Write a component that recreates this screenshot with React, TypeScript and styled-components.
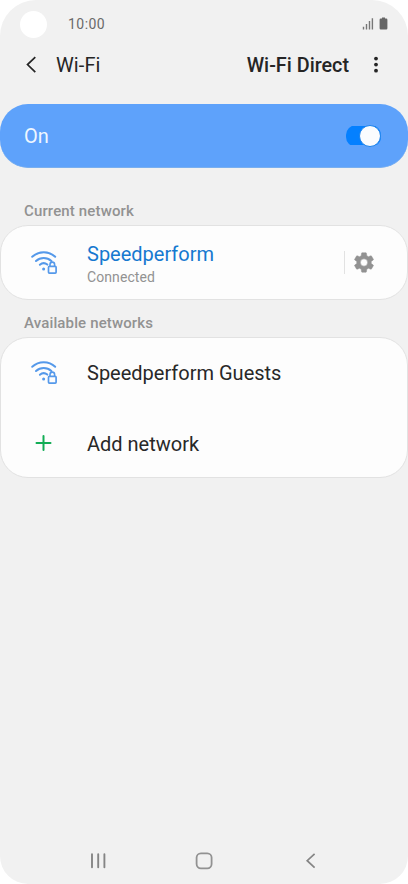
import React from "react";
import styled, { createGlobalStyle } from "styled-components";

const GlobalStyle = createGlobalStyle`
  * { box-sizing: border-box; }
  body { margin: 0; background: #fff; }
  button { border: 0; padding: 0; background: none; font: inherit; color: inherit; display: flex; }
  svg { display: block; flex: none; }
`;

const Screen = styled.main`
  width: 408px;
  height: 884px;
  display: flex;
  flex-direction: column;
  overflow: hidden;
  background: #f1f1f1;
  border-radius: 36px 36px 28px 28px;
  font-family: Roboto, "Liberation Sans", sans-serif;
  color: #252525;
`;

const StatusBar = styled.div`
  height: 46px;
  padding: 2px 20px 0 20px;
  display: flex;
  align-items: center;
`;

const Camera = styled.span`
  width: 27px;
  height: 27px;
  border-radius: 50%;
  background: #fff;
`;

const Clock = styled.span`
  margin-left: 21px;
  font-size: 14px;
  line-height: 20px;
  letter-spacing: 0.45px;
  color: #6a6a6a;
`;

const StatusIcons = styled.div`
  margin-left: auto;
  display: flex;
  gap: 5px;
`;

const Header = styled.header`
  height: 38px;
  padding: 0 29px 0 26px;
  display: flex;
  align-items: center;
`;

const Title = styled.h1`
  margin: 0 auto 0 19px;
  font-size: 20px;
  line-height: 24px;
  font-weight: 400;
  letter-spacing: 0.1px;
`;

const HeaderAction = styled.button`
  padding-top: 1px;
  font-size: 19.8px;
  line-height: 24px;
  font-weight: 500;
`;

const MenuButton = styled.button`
  margin-left: 24px;
`;

const PowerCard = styled.section`
  height: 64px;
  margin-top: 20px;
  padding: 0 27px 0 24px;
  display: flex;
  align-items: center;
  justify-content: space-between;
  border-radius: 28px;
  background: #5ea2fb;
  border-bottom: 1px solid #79afef;
  color: #eff7ff;
  font-size: 20px;
`;

const PowerLabel = styled.span`
  padding-top: 1px;
`;

const Switch = styled.button`
  width: 35px;
  height: 22px;
  align-items: center;
  justify-content: flex-end;
  background: linear-gradient(#0480ff, #0480ff) center / 100% 19px no-repeat;
  border-radius: 10px;
`;

const Thumb = styled.span`
  width: 22px;
  height: 22px;
  border-radius: 50%;
  border: 1px solid #1b82ec;
  background: #fafcfe;
`;

const SectionLabel = styled.h2<{ $top: number }>`
  margin: ${(p) => p.$top}px 0 4px 24px;
  font-size: 15px;
  line-height: 20px;
  font-weight: 500;
  letter-spacing: 0.14px;
  color: #929292;
`;

const Card = styled.section`
  padding: 0 33px 0 29px;
  border: 1px solid #e2e2e2;
  border-radius: 28px;
  background: #fdfdfd;
`;

const Row = styled.div<{ $height: number; $top?: number }>`
  height: ${(p) => p.$height}px;
  padding-top: ${(p) => p.$top ?? 0}px;
  display: flex;
  align-items: center;
`;

const RowIcon = styled.span`
  width: 57px;
`;

const RowText = styled.div<{ $top?: number }>`
  padding-top: ${(p) => p.$top ?? 0}px;
`;

const Name = styled.div<{ $active?: boolean }>`
  font-size: 20px;
  line-height: 24px;
  color: ${(p) => (p.$active ? "#1679d0" : "#282828")};
`;

const Detail = styled.div`
  margin-top: 2px;
  font-size: 14px;
  line-height: 18px;
  letter-spacing: 0.08px;
  color: #929292;
`;

const Settings = styled.button`
  height: 23px;
  margin-left: auto;
  padding-left: 9px;
  align-items: center;
  border-left: 1px solid #e2e2e2;
`;

const NavBar = styled.nav`
  height: 48px;
  margin-top: auto;
  padding: 1px 88px 0;
  display: flex;
  align-items: center;
  justify-content: space-between;
`;

const WifiIcon = () => (
  <svg width="29" height="24" viewBox="0 0 29 24" fill="none" stroke="#5599ea" strokeWidth="2" strokeLinecap="round">
    <path d="M2.2 5.8C8.8 -.3 18.8 -.3 25.2 5.8M6 10c4.4-4 11-4 15.4 0M9.9 13.8c2.2-2 5.2-2 7.4-.2" />
    <circle cx="13.6" cy="18" r="1.5" fill="#5599ea" stroke="none" />
    <path d="M20 15.3v-1.9a2.3 2.3 0 0 1 4.6 0v1.9" strokeWidth="1.6" />
    <rect x="18.5" y="15.4" width="7.6" height="6.7" rx=".9" strokeWidth="1.7" />
  </svg>
);

const PlusIcon = () => (
  <svg width="29" height="24" viewBox="0 0 29 24" fill="none" stroke="#12ad55" strokeWidth="2" strokeLinecap="round">
    <path d="M6.5 12h14M13.5 5v14" />
  </svg>
);

const GearIcon = () => (
  <svg width="20" height="21" viewBox="2.3 1.6 19.4 20.8" fill="#929292" stroke="#929292" strokeWidth=".5" strokeLinejoin="round">
    <path d="M19.14 12.94c.04-.3.06-.61.06-.94 0-.32-.02-.64-.07-.94l2.03-1.58a.49.49 0 0 0 .12-.61l-1.92-3.32a.488.488 0 0 0-.59-.22l-2.39.96c-.5-.38-1.03-.7-1.62-.94l-.36-2.54a.484.484 0 0 0-.48-.41h-3.84c-.24 0-.43.17-.47.41l-.36 2.54c-.59.24-1.13.57-1.62.94l-2.39-.96c-.22-.08-.47 0-.59.22L2.74 8.87c-.12.21-.08.47.12.61l2.03 1.58c-.05.3-.09.63-.09.94s.02.64.07.94l-2.03 1.58a.49.49 0 0 0-.12.61l1.92 3.32c.12.22.37.29.59.22l2.39-.96c.5.38 1.03.7 1.62.94l.36 2.54c.05.24.24.41.48.41h3.84c.24 0 .44-.17.47-.41l.36-2.54c.59-.24 1.13-.56 1.62-.94l2.39.96c.22.08.47 0 .59-.22l1.92-3.32c.12-.22.07-.47-.12-.61l-2.01-1.58zM12 15.6A3.6 3.6 0 1 1 12 8.4a3.6 3.6 0 0 1 0 7.2z" />
  </svg>
);

export default function App() {
  return (
    <>
      <GlobalStyle />
      <Screen>
        <StatusBar>
          <Camera />
          <Clock>10:00</Clock>
          <StatusIcons>
            <svg width="12" height="14" viewBox="0 0 12 14" fill="none" stroke="#777" strokeWidth="1.4">
              <path d="M1.5 12.5V9.8M4.5 12.5V7M7.5 12.5V4M10.4 12.5V1.2" />
            </svg>
            <svg width="9" height="14" viewBox="0 0 9 14" fill="#666">
              <path d="M3 .4h3v1.2h1.2q1.2 0 1.2 1.2v8.5q0 1.2-1.2 1.2H1.8Q.6 12.5 .6 11.3V2.8q0-1.2 1.2-1.2H3z" />
            </svg>
          </StatusIcons>
        </StatusBar>
        <Header>
          <button aria-label="Back">
            <svg width="11" height="18" viewBox="0 0 11 18" fill="none" stroke="#252525" strokeWidth="1.7">
              <path d="M9.3 1.2 1.5 8.6l7.8 7.5" />
            </svg>
          </button>
          <Title>Wi-Fi</Title>
          <HeaderAction>Wi-Fi Direct</HeaderAction>
          <MenuButton aria-label="More options">
            <svg width="6" height="18" viewBox="0 0 6 18" fill="#252525">
              <circle cx="3" cy="2.6" r="1.9" />
              <circle cx="3" cy="8.6" r="1.9" />
              <circle cx="3" cy="14.7" r="1.9" />
            </svg>
          </MenuButton>
        </Header>
        <PowerCard>
          <PowerLabel>On</PowerLabel>
          <Switch role="switch" aria-checked="true" aria-label="Wi-Fi">
            <Thumb />
          </Switch>
        </PowerCard>
        <SectionLabel $top={33}>Current network</SectionLabel>
        <Card>
          <Row $height={73}>
            <RowIcon><WifiIcon /></RowIcon>
            <RowText $top={2}>
              <Name $active>Speedperform</Name>
              <Detail>Connected</Detail>
            </RowText>
            <Settings aria-label="Network settings"><GearIcon /></Settings>
          </Row>
        </Card>
        <SectionLabel $top={13}>Available networks</SectionLabel>
        <Card>
          <Row $height={69}>
            <RowIcon><WifiIcon /></RowIcon>
            <RowText><Name>Speedperform Guests</Name></RowText>
          </Row>
          <Row $height={70} $top={2}>
            <RowIcon><PlusIcon /></RowIcon>
            <RowText $top={2}><Name>Add network</Name></RowText>
          </Row>
        </Card>
        <NavBar>
          <button aria-label="Recents">
            <svg width="20" height="18" viewBox="0 0 20 18" fill="none" stroke="#858585" strokeWidth="1.9" strokeLinecap="round">
              <path d="M4 2.2v13M10.2 2.2v13M16.4 2.2v13" />
            </svg>
          </button>
          <button aria-label="Home">
            <svg width="18" height="18" viewBox="0 0 18 18" fill="none" stroke="#929292" strokeWidth="1.8">
              <rect x="1.6" y="1.3" width="15" height="15" rx="4.3" />
            </svg>
          </button>
          <button aria-label="Back">
            <svg width="20" height="18" viewBox="0 0 20 18" fill="none" stroke="#858585" strokeWidth="1.7">
              <path d="M14.6 1.8 7.2 8.7l7.4 6.9" />
            </svg>
          </button>
        </NavBar>
      </Screen>
    </>
  );
}
